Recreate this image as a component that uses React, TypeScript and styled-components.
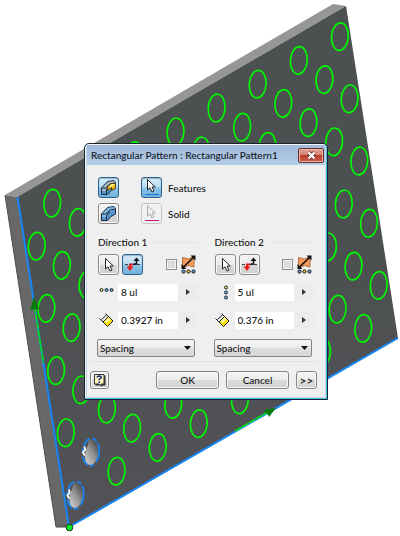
import React, { useState } from "react";
import styled, { createGlobalStyle, css } from "styled-components";

const GlobalStyle = createGlobalStyle`
  * { box-sizing: border-box; }
  body {
    margin: 0;
    background: #fff;
    color: #141414;
    font-family: Lato, "Noto Sans", sans-serif;
    font-size: 10px;
    font-weight: 500;
  }
  button, input, select { font: inherit; color: inherit; margin: 0; }
`;

const Stage = styled.main`
  position: relative;
  width: 100%;
`;

const Scene = styled.svg`
  display: block;
  width: 100%;
  height: auto;
`;

const Dialog = styled.section`
  position: absolute;
  left: 21%;
  top: 26.7%;
  width: 61%;
  min-width: 244px;
  padding: 0 2px 2px;
  border: 1px solid #16242c;
  border-radius: 5px 5px 0 0;
  background: #c3d6ea;
  box-shadow: inset -1px -1px 0 #45c3dc, inset 1px 1px 0 #eef5fc;
`;

const TitleBar = styled.header`
  display: flex;
  align-items: center;
  justify-content: space-between;
  height: 20px;
  padding: 0 1px 0 4px;
  margin-top: 1px;
  background: linear-gradient(#9fb9d8, #b4cde8);
`;

const Title = styled.h1`
  margin: 0;
  font-size: 10px;
  line-height: 20px;
  font-weight: 500;
  white-space: nowrap;
  color: #10161e;
`;

const CloseButton = styled.button`
  display: grid;
  place-items: center;
  flex: none;
  width: 26px;
  height: 15px;
  padding: 0;
  border: 1px solid #69302f;
  border-radius: 2px;
  background: linear-gradient(#e2a093 0%, #d68475 45%, #b93a25 50%, #ce6350 100%);
  box-shadow: inset 0 0 0 1px #e9b4a8;
`;

const Body = styled.form`
  padding: 12px 11px 8px 10px;
  background: #efefef;
`;

const Choices = styled.div`
  display: grid;
  grid-template-columns: 21px auto 1fr;
  gap: 5px 0;
  align-items: center;
  margin-left: 1px;
`;

const ToolButton = styled.button<{ $tone?: "active" | "faded" }>`
  display: grid;
  place-items: center;
  flex: none;
  width: 21px;
  height: 21px;
  padding: 0;
  border: 1px solid #8a8a8a;
  border-radius: 3px;
  background: linear-gradient(#f3f3f3 0%, #e9e9e9 50%, #d8d8d8 52%, #d0d0d0 100%);
  box-shadow: inset 0 0 0 1px #f8f8f8;
  ${(p) =>
    p.$tone === "active" &&
    css`
      border-color: #2c628b;
      background: linear-gradient(#d9edf9 0%, #b7dcf2 48%, #8cc5e8 52%, #73b1da 100%);
      box-shadow: inset 0 1px 1px #94b5ca;
    `}
  ${(p) =>
    p.$tone === "faded" &&
    css`
      border-color: #c4c4c4;
      background: #f1f1f1;
      box-shadow: none;
    `}
`;

const PickButton = styled(ToolButton)`
  margin: 0 6px 0 22px;
`;

const Directions = styled.div`
  display: grid;
  grid-template-columns: 1fr 1fr;
  gap: 16px;
  margin-top: 11px;
`;

const Group = styled.fieldset`
  display: flex;
  flex-direction: column;
  min-width: 0;
  margin: 0;
  padding: 0;
  border: 0;
`;

const Legend = styled.legend`
  display: flex;
  align-items: center;
  gap: 5px;
  width: 100%;
  padding: 0 0 0 1px;
  margin-bottom: 4px;
  line-height: 15px;
  &::after {
    content: "";
    flex: 1;
    height: 1px;
    background: #e2e5ea;
  }
`;

const ToolRow = styled.div`
  display: flex;
  align-items: center;
  gap: 3px;
  margin: 0 0 8px 1px;
`;

const Midplane = styled.label`
  display: flex;
  align-items: center;
  gap: 4px;
  margin-left: auto;
  margin-right: 2px;
`;

const Check = styled.input`
  appearance: none;
  width: 11px;
  height: 11px;
  border: 1px solid #8f8f8f;
  background: #dcdcdc;
  box-shadow: inset 0 0 0 1px #f4f4f4;
  &:checked { background: #3b7fb4; }
`;

const FieldRow = styled.div`
  display: flex;
  align-items: center;
  height: 18px;
  margin-bottom: 10px;
`;

const FieldLabel = styled.label`
  display: grid;
  place-items: center;
  width: 21px;
  height: 18px;
  padding-right: 3px;
`;

const TextBox = styled.input`
  flex: 1;
  min-width: 0;
  height: 17px;
  padding: 0 0 0 3px;
  border: 0;
  background: #fff;
  line-height: 17px;
`;

const MoreButton = styled.button`
  display: grid;
  place-items: center;
  width: 20px;
  height: 17px;
  padding: 0;
  border: 0;
  background: #ececec;
`;

const SelectWrap = styled.div`
  display: grid;
  align-items: center;
  width: 98px;
  max-width: 100%;
  & > * { grid-area: 1 / 1; }
  & > svg { justify-self: end; margin-right: 4px; pointer-events: none; }
`;

const Select = styled.select`
  appearance: none;
  width: 100%;
  height: 18px;
  padding: 0 16px 0 2px;
  border: 1px solid #858585;
  border-radius: 2px;
  background: linear-gradient(#f4f4f4 0%, #ececec 50%, #dedede 52%, #d6d6d6 100%);
  line-height: 15px;
`;

const Footer = styled.footer`
  display: flex;
  align-items: center;
  gap: 7px;
  margin: 4px -3px 0 -7px;
  padding-top: 9px;
  border-top: 1px solid #dfe3ea;
`;

const PushButton = styled.button<{ $small?: boolean }>`
  display: grid;
  place-items: center;
  width: ${(p) => (p.$small ? "21px" : "63px")};
  height: 18px;
  padding: 0;
  border: 1px solid #858585;
  border-radius: 3px;
  background: linear-gradient(#f4f4f4 0%, #ebebeb 50%, #dadada 52%, #d2d2d2 100%);
  box-shadow: inset 0 0 0 1px #f8f8f8;
  font-size: ${(p) => (p.$small ? "12px" : "10px")};
  line-height: 15px;
`;

const HelpButton = styled(PushButton)`
  width: 19px;
  margin-right: auto;
`;

const Arrow = ({ faded = false, x = 5, y = 2 }) => (
  <path
    transform={`translate(${x} ${y})`}
    d="M0.5 0.5V11L3 8.8L5 13L7 12L5 8H8.3Z"
    fill={faded ? "#f2f2f2" : "#fff"}
    stroke={faded ? "#aaa" : "#222"}
  />
);

const CursorIcon = () => (
  <svg width="17" height="17" aria-hidden="true"><Arrow x={5} y={2} /></svg>
);

const PickIcon = ({ faded = false }) => (
  <svg width="19" height="19" aria-hidden="true">
    <Arrow faded={faded} x={5} y={1} />
    <path d="M3 16.5H17" stroke={faded ? "#c4128c" : "#1676e0"} />
  </svg>
);

const BlockIcon = ({ feature = false }) => (
  <svg width="17" height="17" aria-hidden="true">
    <path d="M1.5 9L7.5 2.5L14 1.5L15.5 3.5V9L11 11.5L7.5 15.5H1.5Z" fill="#5594ca" stroke="#172c40" />
    <path d="M2 9L8 3L14 2L15 4L10 6.5Q6 7 6 12H2Z" fill={feature ? "#a9b8c2" : "#86b9e2"} />
    <path d="M2 9H5.5L10 5L15 4M6.5 15V11Q7 8 10 7" fill="none" stroke="#172c40" />
    {feature && (
      <>
        <path d="M7.5 8L11 4.5H15.5V9L11.5 11.5V8.5L7.5 11.5Z" fill="#f8bd12" stroke="#5b430b" />
        <path d="M8.5 8L11.5 5H15L11.5 8Z" fill="#fff08a" />
      </>
    )}
  </svg>
);

const FlipIcon = () => (
  <svg width="19" height="19" aria-hidden="true">
    <path d="M2 9.5H17" stroke="#34434c" strokeDasharray="3 1" />
    <path d="M10 9.5H7V13" fill="none" stroke="#e3201b" strokeWidth="2" />
    <path d="M3.5 11.5H10.5L7 16Z" fill="#ef1d17" />
    <path d="M10.5 9H13.5V5" fill="none" stroke="#111" strokeWidth="1.5" />
    <path d="M10.5 6L13.5 2.5L16.5 6Z" fill="#111" />
  </svg>
);

const MidplaneIcon = () => (
  <svg width="15" height="19" role="img" aria-label="Midplane">
    <path d="M1.5 2.5L7.5 4L13 1.5V12L7.5 10.5L1.5 13Z" fill="#f29b5c" stroke="#b26f3b" />
    <path d="M2 12.5L12.5 2.5" stroke="#111" strokeWidth="1.6" />
    <path d="M9.5 0.5H14.5V5.5Z M0.5 9V14H5.5Z" fill="#111" />
    <circle cx="2.5" cy="16.5" r="1.6" fill="#5ca5d8" stroke="#111" />
    <circle cx="7.5" cy="16.5" r="1.6" fill="#f4c53a" stroke="#111" />
    <circle cx="12.5" cy="16.5" r="1.6" fill="#5ca5d8" stroke="#111" />
  </svg>
);

const CountIcon = ({ vertical = false }) => (
  <svg width="15" height="15" role="img" aria-label="Count">
    {[2.5, 7.5, 12.5].map((p, i) => (
      <circle
        key={p}
        cx={vertical ? 11 : p}
        cy={vertical ? p : 5}
        r="1.5"
        fill={i === 0 ? "#f0d050" : "#6fb0dc"}
        stroke="#1a2730"
      />
    ))}
  </svg>
);

const DistanceIcon = () => (
  <svg width="15" height="15" role="img" aria-label="Distance">
    <path d="M2.5 6.5L8 1.5" stroke="#222" />
    <path d="M0.5 5.5L6.5 11.5M6.5 0.5L11 5" stroke="#222" />
    <path d="M9.5 3.5L14 8L8.5 13.5L4 9Z" fill="#ffe000" stroke="#222" />
    <path d="M9.5 4.5L5.5 8.5L7.5 10L11.5 6.5Z" fill="#fff9a5" />
  </svg>
);

const HelpIcon = () => (
  <svg width="15" height="14" aria-hidden="true">
    <path d="M3.5 2.5H13.5V12.5H10.5V13.5L8.5 12.5H3.5Z" fill="#333" />
    <path d="M2.5 1.5H12V11H9.5V13L7 11H2.5Z" fill="#fff6bd" stroke="#333" />
    <path d="M5.2 4.6Q5.2 3 7.2 3T9.2 4.6Q9.2 5.6 7.3 6.3V7.3" fill="none" stroke="#17247e" strokeWidth="1.5" />
    <circle cx="7.3" cy="9.2" r="0.9" fill="#17247e" />
  </svg>
);

const MoreIcon = () => (
  <svg width="4" height="6" aria-hidden="true"><path d="M0 0L4 3L0 6Z" fill="#333" /></svg>
);

type DirectionProps = { n: number; count: string; distance: string; flipped?: boolean };

function Direction({ n, count, distance, flipped = false }: DirectionProps) {
  const [flip, setFlip] = useState(flipped);
  return (
    <Group>
      <Legend>Direction {n}</Legend>
      <ToolRow>
        <ToolButton type="button" aria-label="Select direction"><CursorIcon /></ToolButton>
        <ToolButton
          type="button"
          aria-label="Flip direction"
          aria-pressed={flip}
          $tone={flip ? "active" : undefined}
          onClick={() => setFlip(!flip)}
        >
          <FlipIcon />
        </ToolButton>
        <Midplane><Check type="checkbox" /><MidplaneIcon /></Midplane>
      </ToolRow>
      <FieldRow>
        <FieldLabel htmlFor={`count${n}`}><CountIcon vertical={n === 2} /></FieldLabel>
        <TextBox id={`count${n}`} defaultValue={count} />
        <MoreButton type="button" aria-label="Count options"><MoreIcon /></MoreButton>
      </FieldRow>
      <FieldRow>
        <FieldLabel htmlFor={`distance${n}`}><DistanceIcon /></FieldLabel>
        <TextBox id={`distance${n}`} defaultValue={distance} />
        <MoreButton type="button" aria-label="Distance options"><MoreIcon /></MoreButton>
      </FieldRow>
      <SelectWrap>
        <Select aria-label={`Direction ${n} method`} defaultValue="Spacing">
          <option>Spacing</option>
          <option>Distance</option>
        </Select>
        <svg width="7" height="4" aria-hidden="true"><path d="M0 0H7L3.5 4Z" fill="#111" /></svg>
      </SelectWrap>
    </Group>
  );
}

const columns = [0, 1, 2, 3, 4, 5, 6, 7];
const rows = [0, 1, 2, 3, 4];
const seeds = [{ x: 75.5, y: 495 }, { x: 91, y: 452 }];

function Plate() {
  return (
    <Scene viewBox="0 0 400 536" role="img" aria-label="Plate with patterned holes">
      <defs>
        <linearGradient id="face" x1="0" y1="0" x2="0" y2="1">
          <stop offset="0" stopColor="#4b5050" />
          <stop offset="0.5" stopColor="#4d5051" />
          <stop offset="1" stopColor="#525257" />
        </linearGradient>
        <linearGradient id="bore" x1="0.2" y1="0.9" x2="0.8" y2="0.1">
          <stop offset="0" stopColor="#c4c4c4" />
          <stop offset="0.5" stopColor="#929292" />
          <stop offset="1" stopColor="#4c4c4c" />
        </linearGradient>
      </defs>
      <path d="M5 195L333 4L346 6L17 197Z" fill="#969696" />
      <path d="M5 195L17 197L69 527H56Z" fill="#686868" />
      <path d="M5 195L56 527H69" fill="none" stroke="#4c4c4c" />
      <path d="M17 197L346 6L398 338L69 527Z" fill="url(#face)" />
      <g fill="none" stroke="#00f800" strokeWidth="1.7">
        {seeds.map((s) =>
          rows.map((j) =>
            columns.map((i) =>
              i + j === 0 ? null : (
                <ellipse
                  key={`${s.x}-${i}-${j}`}
                  rx="8.4"
                  ry="13.8"
                  transform={`translate(${s.x + 41.1 * i - 9.7 * j} ${s.y - 23.8 * i - 62.2 * j}) rotate(4)`}
                />
              )
            )
          )
        )}
      </g>
      {seeds.map((s) => (
        <g key={s.x} transform={`translate(${s.x} ${s.y}) rotate(4)`}>
          <ellipse rx="8" ry="13.5" fill="#535357" />
          <path d="M-3 -12Q4 -14 7 -5Q9 4 4 11Q0 15 -4 11Q-7 6 -5 -3Q-3 -6 -3 -12Z" fill="url(#bore)" />
          <ellipse rx="8.2" ry="13.8" fill="none" stroke="#1684f5" strokeWidth="1.8" strokeDasharray="10 3 5 2" />
          <path d="M-7 -5L-6 -2L-8 1L-6 4" fill="none" stroke="#fff" strokeWidth="1.8" />
        </g>
      ))}
      <path d="M17.5 197L69 527L398 338" fill="none" stroke="#1685f5" strokeWidth="2" />
      <path d="M34.5 306L43.5 363M235 431L268 412" stroke="#00e400" strokeWidth="1.6" strokeDasharray="7 1" />
      <path d="M34 297L39 309L30 310Z" fill="#087a0d" />
      <path d="M276 408L267 409L264 412L267 413L269 417Z" fill="#087a0d" />
      <circle cx="69.5" cy="527.5" r="3.3" fill="#00ef27" stroke="#123c19" />
    </Scene>
  );
}

export default function App() {
  const [target, setTarget] = useState("features");
  return (
    <>
      <GlobalStyle />
      <Stage>
        <Plate />
        <Dialog role="dialog" aria-labelledby="title">
          <TitleBar>
            <Title id="title">Rectangular Pattern : Rectangular Pattern1</Title>
            <CloseButton type="button" aria-label="Close">
              <svg width="11" height="9" aria-hidden="true">
                <path d="M2.5 1.5L8.5 7.5M8.5 1.5L2.5 7.5" stroke="#633" strokeWidth="4" />
                <path d="M2.5 1.5L8.5 7.5M8.5 1.5L2.5 7.5" stroke="#fff" strokeWidth="2.4" />
              </svg>
            </CloseButton>
          </TitleBar>
          <Body onSubmit={(e) => e.preventDefault()}>
            <Choices>
              <ToolButton
                type="button"
                aria-label="Pattern individual features"
                $tone={target === "features" ? "active" : undefined}
                onClick={() => setTarget("features")}
              >
                <BlockIcon feature />
              </ToolButton>
              <PickButton type="button" id="features" $tone="active"><PickIcon /></PickButton>
              <label htmlFor="features">Features</label>
              <ToolButton
                type="button"
                aria-label="Pattern a solid"
                $tone={target === "solid" ? "active" : undefined}
                onClick={() => setTarget("solid")}
              >
                <BlockIcon />
              </ToolButton>
              <PickButton type="button" id="solid" $tone="faded"><PickIcon faded /></PickButton>
              <label htmlFor="solid">Solid</label>
            </Choices>
            <Directions>
              <Direction n={1} count="8 ul" distance="0.3927 in" flipped />
              <Direction n={2} count="5 ul" distance="0.376 in" />
            </Directions>
            <Footer>
              <HelpButton type="button" aria-label="Help"><HelpIcon /></HelpButton>
              <PushButton type="submit">OK</PushButton>
              <PushButton type="button">Cancel</PushButton>
              <PushButton type="button" $small aria-label="More">&gt;&gt;</PushButton>
            </Footer>
          </Body>
        </Dialog>
      </Stage>
    </>
  );
}
